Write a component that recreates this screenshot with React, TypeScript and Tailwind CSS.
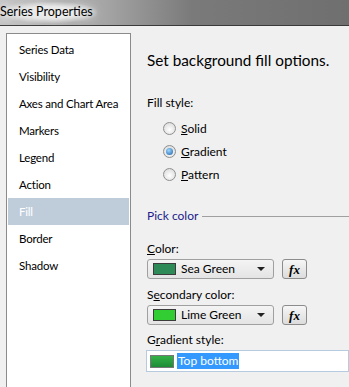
import React from "react";

const items = [
  "Series Data",
  "Visibility",
  "Axes and Chart Area",
  "Markers",
  "Legend",
  "Action",
  "Fill",
  "Border",
  "Shadow",
];

const Radio = ({ checked, label }: { checked?: boolean; label: string }) => (
  <div className="flex items-center h-[23px]">
    <span className="w-[13px] h-[13px] rounded-full border border-[#8e8f8f] bg-[radial-gradient(circle_at_50%_60%,#ffffff,#d4d4d4)] flex items-center justify-center">
      {checked && (
        <span className="w-[7px] h-[7px] rounded-full bg-[radial-gradient(circle_at_40%_35%,#9fd8ff,#1a5fa8)]" />
      )}
    </span>
    <span className="ml-[5px]">
      <span className="underline">{label[0]}</span>
      {label.slice(1)}
    </span>
  </div>
);

const ColorCombo = ({ swatch, name }: { swatch: string; name: string }) => (
  <div className="flex items-center gap-[8px]">
    <div className="w-[127px] h-[20px] rounded-[3px] border border-[#a0a0a0] bg-[linear-gradient(#f4f4f4,#e4e4e4)] flex items-center pl-[5px] pr-[8px]">
      <span className="w-[23px] h-[12px] border border-[#3c3c3c]" style={{ background: swatch }} />
      <span className="ml-[5px] flex-1">{name}</span>
      <svg width="8" height="4" viewBox="0 0 8 4">
        <path d="M0 0h8L4 4z" fill="#222" />
      </svg>
    </div>
    <div className="w-[25px] h-[20px] rounded-[3px] border border-[#8c8c8c] bg-[linear-gradient(#f6f6f6,#dcdcdc)] flex items-center justify-center">
      <span className="font-['Liberation_Serif',serif] italic font-bold text-[13px] leading-none">
        fx
      </span>
    </div>
  </div>
);

export default function App() {
  return (
    <div className="w-[349px] h-[387px] overflow-hidden bg-[#f0f0f0] font-['Lato',sans-serif] text-[12px] leading-[16px] text-black">
      {/* title bar */}
      <div className="h-[26px] border-b border-[#3a3a3a] bg-[linear-gradient(90deg,#c4c4c4_0%,#a5a5a5_30%,#7a7a7a_55%,#6f6f6f_100%)] flex items-center">
        <span className="text-[12.5px] leading-none py-[4px] pr-[4px] [text-shadow:0_0_8px_#ffffff,0_0_12px_#ffffff,0_0_16px_#f0f0f0] bg-[radial-gradient(ellipse_at_center,#e4e4e4_40%,transparent_75%)]">
          Series Properties
        </span>
      </div>

      <div className="flex pt-[7px]">
        {/* left list */}
        <div className="ml-[6px] w-[125px] h-[360px] bg-white border border-[#8b8b8b] pt-[2px] px-[1px] text-[11.5px] tracking-[-0.2px]">
          {items.map((it) => (
            <div
              key={it}
              className={`h-[27px] flex items-center pl-[11px] ${
                it === "Fill" ? "bg-[#bfcddb] text-white" : ""
              }`}
            >
              {it}
            </div>
          ))}
        </div>

        {/* right pane */}
        <div className="flex-1 pl-[16px] pt-[17px]">
          <div className="text-[15.3px] leading-[20px]">Set background fill options.</div>

          <div className="mt-[25px]">Fill style:</div>
          <div className="pl-[16px] mt-[6px]">
            <Radio label="Solid" />
            <Radio label="Gradient" checked />
            <Radio label="Pattern" />
          </div>

          <div className="flex items-center mt-[22px]">
            <span className="text-[#1c1c8c]">Pick color</span>
            <span className="flex-1 h-px bg-[#a0a0a0] ml-[4px]" />
          </div>

          <div className="mt-[17px]">
            <span className="underline">C</span>olor:
          </div>
          <div className="mt-[2px]">
            <ColorCombo swatch="#2e8b57" name="Sea Green" />
          </div>

          <div className="mt-[8px]">
            S<span className="underline">e</span>condary color:
          </div>
          <div className="mt-[2px]">
            <ColorCombo swatch="#32cd32" name="Lime Green" />
          </div>

          <div className="mt-[7px]">
            G<span className="underline">r</span>adient style:
          </div>
          <div className="mt-[2px] -ml-[1px] h-[22px] bg-white border border-[#b6cbe0] flex items-center pl-[3px]">
            <span className="w-[24px] h-[13px] border border-[#777] bg-[linear-gradient(#34b247,#1e8c37)]" />
            <span className="ml-[3px] bg-[#3399ff] text-white px-[1px]">
              Top bottom
            </span>
          </div>
        </div>
      </div>
    </div>
  );
}
